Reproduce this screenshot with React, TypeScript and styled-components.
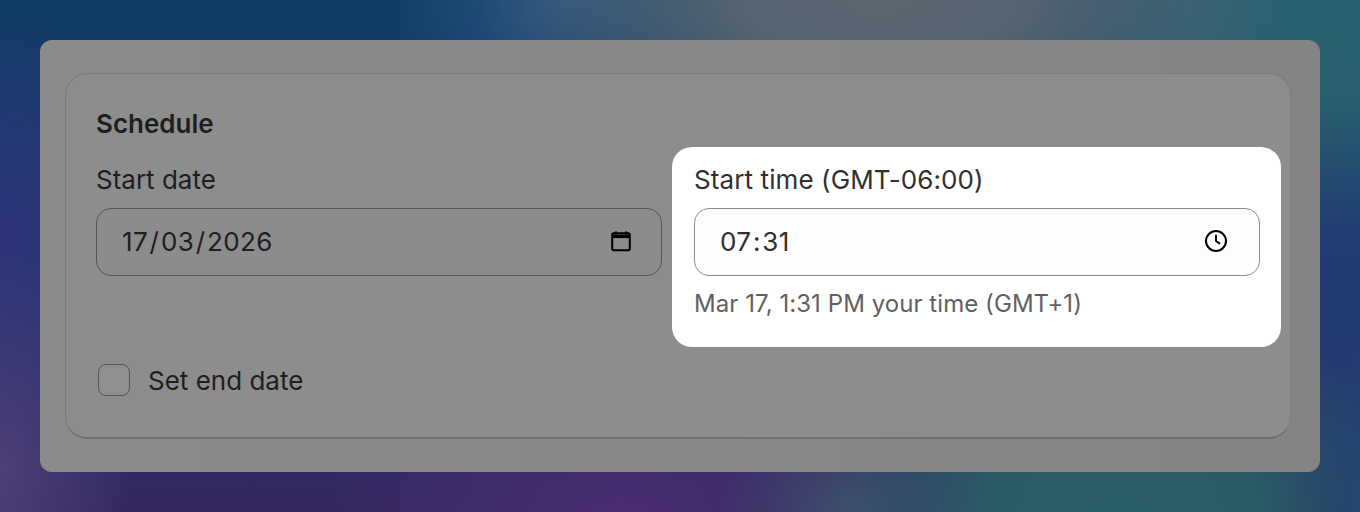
import styled, { createGlobalStyle } from "styled-components";

const GlobalStyle = createGlobalStyle`
  html, body {
    margin: 0;
    height: 100%;
  }
  body {
    font-family: Inter, "Liberation Sans", sans-serif;
  }
`;

const CalendarIcon = () => (
  <svg width="24" height="24" viewBox="0 0 24 24" fill="none">
    <path d="M7 2.5v3M17 2.5v3" stroke="#000" strokeWidth="2.2" />
    <rect x="3.2" y="4.2" width="17.6" height="17" rx="1.6" stroke="#000" strokeWidth="2" />
    <path d="M3.2 5.5h17.6v3.6H3.2z" fill="#000" />
  </svg>
);

const ClockIcon = () => (
  <svg width="24" height="24" viewBox="0 0 24 24" fill="none" stroke="#000">
    <circle cx="12" cy="12" r="10" strokeWidth="2" />
    <path d="M12 6.5V12l3.4 2.4" strokeWidth="1.9" strokeLinecap="round" strokeLinejoin="round" />
  </svg>
);

export default function App() {
  return (
    <Page>
      <GlobalStyle />
      <Modal>
        <Card>
          <Title>Schedule</Title>
          <Fields>
            <Field>
              <Label>Start date</Label>
              <InputBox>
                <Value>
                  17<Separator>/</Separator>03<Separator>/</Separator>2026
                </Value>
                <CalendarIcon />
              </InputBox>
            </Field>
            <Highlight>
              <Label>Start time (GMT-06:00)</Label>
              <InputBox $light>
                <Value>
                  07<Separator>:</Separator>31
                </Value>
                <ClockIcon />
              </InputBox>
              <Hint>Mar 17, 1:31 PM your time (GMT+1)</Hint>
            </Highlight>
          </Fields>
          <CheckRow>
            <CheckBox />
            <CheckLabel>Set end date</CheckLabel>
          </CheckRow>
        </Card>
      </Modal>
    </Page>
  );
}

const Page = styled.div`
  width: 1360px;
  height: 512px;
  box-sizing: border-box;
  padding: 40px;
  overflow: hidden;
  background:
    radial-gradient(ellipse 400px 170px at 880px 0px, #5a6670 0%, #56646f 35%, rgba(88, 100, 111, 0) 100%),
    radial-gradient(ellipse 380px 240px at 1340px 0px, #2a6272 0%, #2a6070 40%, rgba(42, 98, 114, 0) 100%),
    radial-gradient(ellipse 170px 130px at 560px 0px, #2d5582 0%, rgba(45, 85, 130, 0) 100%),
    radial-gradient(ellipse 70px 180px at 1370px 512px, #1f4a74 0%, rgba(31, 74, 116, 0) 100%),
    radial-gradient(ellipse 300px 220px at 1120px 512px, #2c6068 0%, #2a5c66 45%, rgba(44, 96, 104, 0) 100%),
    radial-gradient(ellipse 130px 110px at 850px 512px, #3f4f6c 0%, rgba(63, 79, 108, 0) 100%),
    radial-gradient(ellipse 300px 120px at 620px 512px, #482c70 0%, rgba(72, 44, 112, 0) 100%),
    radial-gradient(ellipse 130px 220px at 0px 470px, #4d3f78 0%, rgba(77, 63, 120, 0) 100%),
    radial-gradient(ellipse 110px 220px at 0px 230px, #2d3278 0%, rgba(45, 50, 120, 0) 100%),
    radial-gradient(ellipse 200px 260px at 1360px 280px, #213a72 0%, rgba(33, 58, 114, 0) 100%),
    linear-gradient(180deg, #0f3d64 0%, #1f3a74 50%, #35285f 100%);
`;

const Modal = styled.div`
  height: 432px;
  box-sizing: border-box;
  padding: 33px 29px 33px 25px;
  border-radius: 12px;
  background: linear-gradient(90deg, #8c8c8c 0%, #848484 100%);
`;

const Card = styled.div`
  height: 366px;
  box-sizing: border-box;
  padding: 32px 30px 0 30px;
  border-radius: 22px;
  border: 1px solid #7d7d7d;
  border-bottom: 2px solid #707070;
  background: #8d8d8d;
`;

const Title = styled.div`
  font-size: 26px;
  line-height: 36px;
  font-weight: 600;
  color: #1e1e1e;
`;

const Fields = styled.div`
  display: grid;
  grid-template-columns: 566px 566px;
  column-gap: 32px;
  margin-top: 24px;
  height: 166px;
`;

const Field = styled.div`
  display: flex;
  flex-direction: column;
`;

const Highlight = styled(Field)`
  position: relative;
  height: 200px;
  box-sizing: border-box;
  margin: -19px -21px 0 -22px;
  padding: 19px 21px 0 22px;
  border-radius: 20px;
  background: #fff;

  > div:first-child {
    color: #303030;
    letter-spacing: 0.1px;
  }
`;

const Label = styled.div`
  font-size: 26px;
  line-height: 28px;
  color: #1e1e1e;
`;

const InputBox = styled.div<{ $light?: boolean }>`
  display: flex;
  align-items: center;
  justify-content: space-between;
  height: 68px;
  box-sizing: border-box;
  margin-top: 14px;
  padding: 0 ${(p) => (p.$light ? "31px" : "28px")} 2px 25px;
  border-radius: 15px;
  border: 1px solid ${(p) => (p.$light ? "#8c8c8c" : "#555")};
  background: ${(p) => (p.$light ? "#fdfdfd" : "#8c8c8c")};
  color: ${(p) => (p.$light ? "#303030" : "#1e1e1e")};
`;

const Value = styled.span`
  font-size: 26px;
  letter-spacing: 0.35px;
`;

const Separator = styled.span`
  margin: 0 1.6px;
`;

const Hint = styled.div`
  margin-top: 13px;
  font-size: 24px;
  line-height: 30px;
  letter-spacing: 0.06px;
  color: #616161;
`;

const CheckRow = styled.div`
  display: flex;
  align-items: center;
  gap: 18px;
  margin-top: 32px;
  padding-left: 2px;
`;

const CheckBox = styled.div`
  width: 32px;
  height: 32px;
  box-sizing: border-box;
  border-radius: 8px;
  border: 1px solid #555;
  background: #8f8f8f;
`;

const CheckLabel = styled.span`
  font-size: 26px;
  color: #1e1e1e;
`;
